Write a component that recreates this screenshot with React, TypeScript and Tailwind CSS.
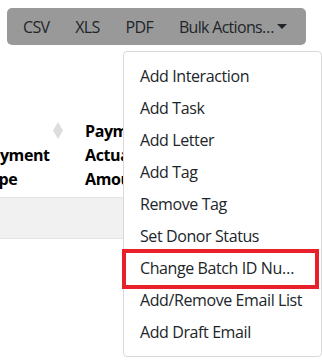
import React from 'react';

const menuItems = [
    'Add Interaction',
    'Add Task',
    'Add Letter',
    'Add Tag',
    'Remove Tag',
    'Set Donor Status',
    'Change Batch ID Nu…',
    'Add/Remove Email List',
    'Add Draft Email',
];

const App: React.FC = () => {
    return (
        <div
            className="relative w-[322px] h-[361px] overflow-hidden bg-white text-[#212529] tracking-[-0.4px]"
            style={{ fontFamily: '"Open Sans", "Noto Sans", sans-serif' }}
        >
            {/* Export toolbar */}
            <div className="pl-[7px] pt-[8px]">
                <div className="inline-flex h-[37px] items-center rounded-[5px] bg-[#999999] pl-[3px] pr-[6px] text-[16px] tracking-[-0.7px]">
                    <span className="px-[13px]">CSV</span>
                    <span className="px-[13px]">XLS</span>
                    <span className="px-[13px]">PDF</span>
                    <span className="flex items-center px-[13px]">
                        Bulk Actions…
                        <span className="ml-[3px] h-0 w-0 border-x-[5px] border-t-[5px] border-x-transparent border-t-[#212529]" />
                    </span>
                </div>
            </div>

            {/* Table header */}
            <div className="mt-[74px] flex items-end pb-[6px] text-[16px] font-bold leading-[24px] text-black">
                <div className="ml-[-19px] w-[72px] shrink-0">
                    Payment
                    <br />
                    Type
                </div>
                <div className="mb-[52px] flex h-[17px] w-[10px] shrink-0 items-center justify-center">
                    <svg width="10" height="17" viewBox="0 0 10 17">
                        <path d="M5 0 L10 8.5 L5 17 L0 8.5 Z" fill="#dddddd" />
                    </svg>
                </div>
                <div className="ml-[22px] shrink-0">
                    Payment
                    <br />
                    Actual
                    <br />
                    Amount
                </div>
            </div>
            <div className="h-[42px] border-y border-[#e3e3e3] bg-[#f1f1f1]" />

            {/* Bulk actions menu */}
            <div className="absolute left-[123px] top-[51px] w-[199px] rounded-[4px] border border-[#d9d9d9] bg-white py-[8px]">
                {menuItems.map((item) => (
                    <div key={item} className="h-[32px] px-[16px] py-[4px] text-[16px] leading-[24px] whitespace-nowrap">
                        {item}
                    </div>
                ))}
            </div>

            {/* Highlight */}
            <div className="absolute left-[122px] top-[249px] h-[40px] w-[197px] border-[4px] border-[#e8202a]" />
        </div>
    );
};

export default App;
